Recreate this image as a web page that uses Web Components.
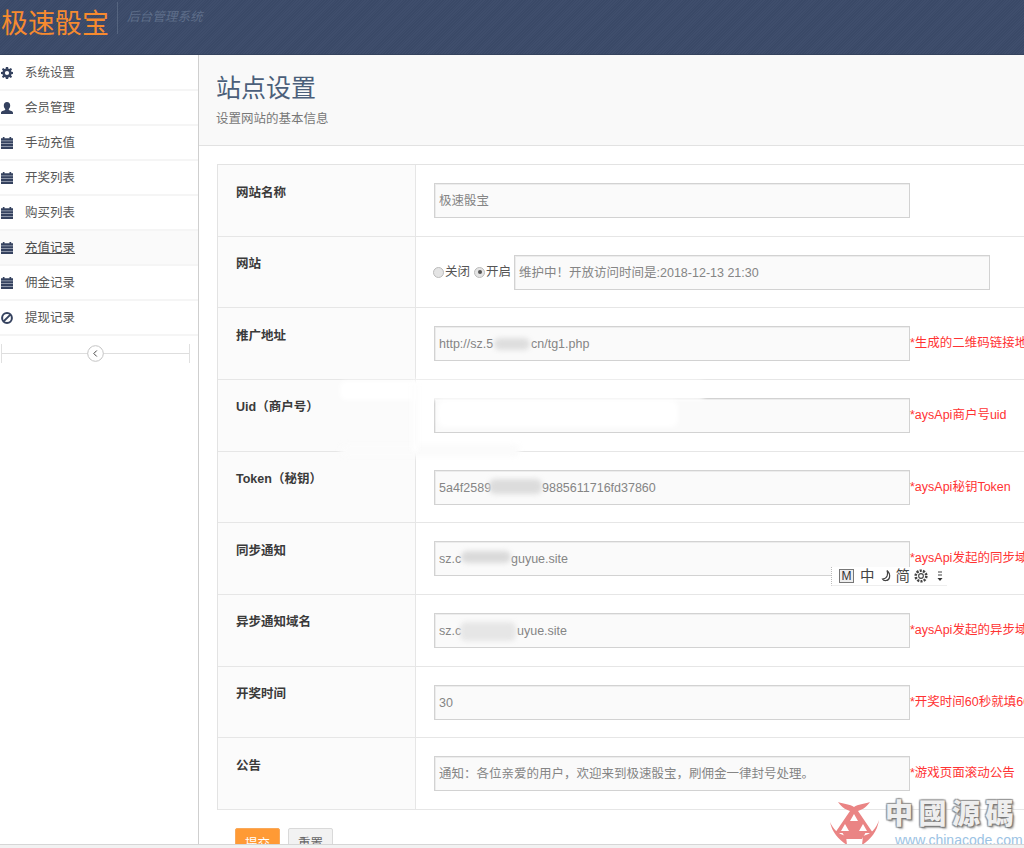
<!DOCTYPE html>
<html lang="zh"><head><meta charset="utf-8"><title>站点设置</title>
<style>
html,body{margin:0;padding:0;width:1024px;height:848px;overflow:hidden;background:#fff;font:12.5px/1.5 "Liberation Sans","Noto Sans CJK SC",sans-serif;color:#555}
</style></head><body>
<admin-app>
  <app-header slot="header" brand="极速骰宝" tag="后台管理系统"></app-header>
  <side-nav slot="side">
    <nav-item icon="gear">系统设置</nav-item>
    <nav-item icon="user">会员管理</nav-item>
    <nav-item icon="cal">手动充值</nav-item>
    <nav-item icon="cal">开奖列表</nav-item>
    <nav-item icon="cal">购买列表</nav-item>
    <nav-item icon="cal" active>充值记录</nav-item>
    <nav-item icon="cal">佣金记录</nav-item>
    <nav-item icon="ban">提现记录</nav-item>
    <nav-collapse></nav-collapse>
  </side-nav>
  <page-head heading="站点设置" sub="设置网站的基本信息"></page-head>
  <settings-form>
    <form-row label="网站名称"><text-field value="极速骰宝"></text-field></form-row>
    <form-row label="网站"><radio-pair></radio-pair><text-field value="维护中！开放访问时间是:2018-12-13 21:30"></text-field></form-row>
    <form-row label="推广地址"><text-field value="http://sz.5" after="cn/tg1.php" at="92"></text-field><span slot="hint">*生成的二维码链接地址</span></form-row>
    <form-row label="Uid（商户号）"><text-field value=""></text-field><span slot="hint">*aysApi商户号uid</span></form-row>
    <form-row label="Token（秘钥）"><text-field value="5a4f2589" after="9885611716fd37860" at="103"></text-field><span slot="hint">*aysApi秘钥Token</span></form-row>
    <form-row label="同步通知"><text-field value="sz.c" after="guyue.site" at="72"></text-field><span slot="hint">*aysApi发起的同步域名</span></form-row>
    <form-row label="异步通知域名"><text-field value="sz.c" after="uyue.site" at="78"></text-field><span slot="hint">*aysApi发起的异步域名</span></form-row>
    <form-row label="开奖时间"><text-field value="30"></text-field><span slot="hint">*开奖时间60秒就填60</span></form-row>
    <form-row label="公告"><text-field value="通知：各位亲爱的用户，欢迎来到极速骰宝，刷佣金一律封号处理。"></text-field><span slot="hint">*游戏页面滚动公告</span></form-row>
    <form-buttons slot="actions"></form-buttons>
  </settings-form>
  <smudge-patch style="left:494px;top:338px;width:36px;height:12px" tone="#dedede"></smudge-patch>
  <smudge-patch style="left:489px;top:479px;width:53px;height:15px" tone="#dcdcdc"></smudge-patch>
  <smudge-patch style="left:461px;top:551px;width:50px;height:12px" tone="#dadada"></smudge-patch>
  <smudge-patch style="left:460px;top:622px;width:56px;height:19px" tone="#e6e6e6"></smudge-patch>
  <smudge-patch style="left:340px;top:381px;width:365px;height:19px" tone="#ffffff"></smudge-patch>
  <smudge-patch style="left:438px;top:400px;width:240px;height:27px" tone="#ffffff"></smudge-patch>
  <smudge-patch style="left:340px;top:444px;width:180px;height:13px" tone="#fbfbfb"></smudge-patch>
  <smudge-patch style="left:411px;top:381px;width:8px;height:72px" tone="#fdfdfd"></smudge-patch>
  <ime-bar></ime-bar>
  <site-mark></site-mark>
</admin-app>
<script>
function def(name, css, html){
  customElements.define(name, class extends HTMLElement{
    connectedCallback(){
      if(this.shadowRoot) return;
      const r=this.attachShadow({mode:'open'});
      const get=k=>this.getAttribute(k)||'';
      r.innerHTML='<style>'+css+'</style>'+(typeof html==='function'?html(get,this):html);
    }
  });
}
const ICONS={
 gear:'<path fill-rule="evenodd" d="M4.900 0h2.200l.3 1.700 1 .4L9.800 1l1.300 1.300-1.100 1.500.4 1 1.600.3v1.900l-1.600.3-.4 1 1.100 1.500-1.300 1.300-1.400-1.100-1 .4-.3 1.700H4.900l-.3-1.700-1-.4L2.200 11 .9 9.700 2 8.200l-.4-1L0 6.900V5.100l1.600-.3.4-1L.9 2.300 2.200 1l1.400 1.100 1-.4zM6 3.900a2.100 2.100 0 1 0 0 4.200 2.100 2.100 0 0 0 0-4.200z"/>',
 user:'<path d="M6 0c2 0 3.200 1.400 3.200 3.400 0 1.400-.5 2.700-1.400 3.500v1c1.500.6 4.200 1.100 4.200 2.900V12H0v-1.200c0-1.800 2.700-2.300 4.200-2.900v-1C3.300 6.100 2.800 4.800 2.800 3.400 2.800 1.400 4 0 6 0z"/>',
 cal:'<path d="M1.800 0h1.700v1.300h5V0h1.700v1.300H12V12H0V1.300h1.800z"/><path fill="#aab1c0" d="M0 3.600h12v.7H0zM0 6.200h12v.7H0zM0 9h12v.7H0z"/>',
 ban:'<circle cx="6" cy="6" r="4.900" fill="none" stroke="#35425f" stroke-width="2"/><path d="M2.600 9.400 9.400 2.600" fill="none" stroke="#35425f" stroke-width="2"/>'
};
def('admin-app',`
 :host{display:grid;grid-template-columns:199px 1fr;grid-template-rows:55px 1fr;width:1024px;height:848px;position:relative;overflow:hidden}
 ::slotted([slot=header]){grid-column:1/3}
 main{display:block;min-width:0;overflow:hidden}
 .foot{position:absolute;left:0;right:0;bottom:0;height:4px;background:#f2f2f2;border-top:1px solid #d6d6d6;box-sizing:border-box}
`,`<slot name="header"></slot><slot name="side"></slot><main><slot></slot></main><div class="foot"></div>`);
def('app-header',`
 :host{display:flex;align-items:flex-start;height:55px;box-sizing:border-box;border-bottom:1px solid #35435e;
  background:#3b4a69 repeating-linear-gradient(135deg,rgba(255,255,255,.018) 0 1px,rgba(0,0,0,.018) 1px 2px)}
 b{font-weight:400;font-size:27px;line-height:36px;color:#f68a2f;margin:6px 8px 0 1px;white-space:nowrap}
 i{display:block;width:1px;height:32px;margin:2px 9px 0 0;background:#55647f}
 em{font-size:12.6px;line-height:18px;color:#5e6e8a;margin-top:8px;white-space:nowrap}
`,g=>`<b>${g('brand')}</b><i></i><em>${g('tag')}</em>`);
def('side-nav',`:host{display:block;border-right:1px solid #cfcfcf;background:#fff;box-sizing:border-box;width:199px;padding-top:1px}`,`<slot></slot>`);
def('nav-item',`
 :host{display:flex;align-items:center;height:35px;box-sizing:border-box;border-bottom:2px solid #f5f5f5;padding:1px 0 0 1px;color:#585858;font-size:12.5px}
 :host([active]){background:#fafafa}
 :host([active]) span{text-decoration:underline;color:#4e4e4e}
 svg{width:12px;height:12px;fill:#35425f;margin-right:12px;flex:none}
`,g=>`<svg viewBox="0 0 12 12" aria-hidden="true">${ICONS[g('icon')]}</svg><span><slot></slot></span>`);
def('nav-collapse',`
 :host{display:flex;align-items:center;height:19px;width:189px;margin:8px 0 0 1px;position:relative;box-sizing:border-box;border-left:1px solid #e0e0e0;border-right:1px solid #e0e0e0}
 hr{flex:1;border:0;height:1px;background:#dedede;margin:0}
 svg{position:absolute;left:85px;top:1px;width:17px;height:17px}
`,`<hr><svg viewBox="0 0 17 17"><circle cx="8.500" cy="8.500" r="7.800" fill="#fff" stroke="#c4c4c4"/><path d="M9.800 5.500 6.800 8.500l3 3" fill="none" stroke="#444" stroke-width="1"/></svg>`);
def('page-head',`
 :host{display:block;height:91px;box-sizing:border-box;padding:14px 0 0 18px;border-bottom:1px solid #e2e2e2;background:#f9f9f9}
 h1{margin:0 0 0 -1px;font-weight:400;font-size:25px;line-height:38px;color:#4b5f7a}
 p{margin:3px 0 0 -1px;font-size:12.5px;line-height:18px;color:#777}
`,g=>`<h1>${g('heading')}</h1><p>${g('sub')}</p>`);
def('settings-form',`
 :host{display:block;padding:18px 0 0 18px;width:1000px}
 .t{border-top:1px solid #e3e3e3;border-left:1px solid #e3e3e3}
 .a{padding:18px 0 0 18px}
`,`<div class="t"><slot></slot></div><div class="a"><slot name="actions"></slot></div>`);
def('form-row',`
 :host{display:grid;grid-template-columns:198px 1fr;height:71.670px;box-sizing:border-box;border-bottom:1px solid #e6e6e6}
 .l{background:#fbfbfb;border-right:1px solid #e6e6e6;padding:18.500px 0 0 18px;font-weight:700;font-size:12.5px;line-height:18px;color:#3a3a3a}
 .v{display:flex;align-items:flex-start;padding:18px 0 0 18px;min-width:0}
 .h{color:#f33;font-size:12.5px;line-height:18px;margin:8px 0 0 0;white-space:nowrap}
`,g=>`<div class="l">${g('label')}</div><div class="v"><slot></slot><span class="h"><slot name="hint"></slot></span></div>`);
def('text-field',`
 :host{display:block;width:476px;height:35px;box-sizing:border-box;border:1px solid #d2d2d2;box-shadow:inset 1px 1px 0 #ececec;background:#fafafa;padding:1px 4px 0;line-height:33px;font-size:12.5px;color:#858585;white-space:nowrap;overflow:hidden;flex:none}
 span{display:inline-block;overflow:hidden;vertical-align:top}
`,g=>g('after')?`<span style="width:${g('at')}px">${g('value')}</span>${g('after')}`:g('value'));
def('radio-pair',`
 :host{display:flex;align-items:center;height:35px;font-size:12.5px;color:#555;flex:none;padding-right:3px;margin-left:-1px}
 i{display:block;width:11px;height:11px;border-radius:50%;border:1px solid #bbb;background:#e4e4e4;box-sizing:border-box;margin-right:1px;position:relative}
 i.on::after{content:"";position:absolute;left:2.500px;top:2.500px;width:4px;height:4px;border-radius:50%;background:#555}
 span{margin-right:4px}
 span:last-child{margin-right:0}
`,`<i></i><span>关闭</span><i class="on"></i><span>开启</span>`);
def('form-buttons',`
 :host{display:flex;gap:8px}
 b{display:block;font-weight:400;width:45px;height:40px;box-sizing:border-box;text-align:center;line-height:30px;font-size:12.5px;border-radius:2px}
 .p{background:#ff9a35;color:#fff;border:1px solid #f9a95a}
 .s{background:#f2f2f2;color:#666;border:1px solid #d9d9d9}
`,`<b class="p">提交</b><b class="s">重置</b>`);
def('smudge-patch',`
 :host{display:block;position:absolute;border-radius:6px;filter:blur(2.500px)}
 div{width:100%;height:100%;border-radius:inherit}
`,g=>`<div style="background:${g('tone')}"></div>`);
def('ime-bar',`
 :host{position:absolute;left:831px;top:567px;width:116px;height:19px;display:flex;align-items:center;background:#fff;box-sizing:border-box;border-left:1px dotted #bbb;border-bottom:1px solid #eee;font-size:14.500px;color:#444;padding-left:7px}
 .m{width:15px;height:14px;border:1px solid #777;box-sizing:border-box;background:#eee;font-size:12px;line-height:12px;text-align:center;margin-right:6px;color:#333;flex:none}
 span{margin-right:5px;line-height:18px}
 svg{display:block;flex:none}
`,`<div class="m">M</div><span>中</span>
 <svg width="12" height="14" viewBox="0 0 12 14" style="margin-right:4px"><path d="M7 1.500c1.500 3.500.5 8-4.500 8.500 1 2 6 2.500 7-1.500.7-3-1-5.700-2.500-7z" fill="none" stroke="#444" stroke-width="1.200"/></svg>
 <span style="margin-right:3px">简</span>
 <svg width="16" height="16" viewBox="0 0 15 15" style="margin-right:8px"><circle cx="7.500" cy="7.500" r="5" fill="none" stroke="#444" stroke-width="2.400" stroke-dasharray="2 1.100"/><circle cx="7.500" cy="7.500" r="2.200" fill="none" stroke="#444"/></svg>
 <svg width="6" height="12" viewBox="0 0 6 12"><path d="M1 2h4M1 5h4" stroke="#444" stroke-width="1"/><path d="M.5 8h5l-2.500 3z" fill="#333"/></svg>`);
def('site-mark',`
 :host{position:absolute;left:828px;top:798px;width:196px;height:50px;display:block;pointer-events:none}
 svg{position:absolute;left:0;top:0}
 b{position:absolute;left:57px;top:-2px;font:900 28px/32px "Noto Sans CJK TC",sans-serif;color:#eee;letter-spacing:5.500px;white-space:nowrap;text-shadow:1px 1px 1px #777,-1px -1px 1px #999,1px -1px 1px #999,-1px 1px 1px #999,2px 2px 2px #aaa}
 u{position:absolute;left:67px;top:35px;text-decoration:none;font:14px/15px "Liberation Sans",sans-serif;color:#9cc3e4;white-space:nowrap}
`,`<svg width="54" height="50" viewBox="0 0 54 50"><g fill="#ea8484"><path d="M10 4C16 6 22 6 26 9 30 6 36 6 42 4 38 10 33 12 30 13L45 35H7L22 13C19 12 14 10 10 4z"/><path d="M2 24C4 34 10 41 19 47L18 38C10 36 5 31 2 24zM51 22C49 34 43 41 34 47L35 38C43 36 48 31 51 22z"/><path d="M14 34h24l-4 7H18z"/></g><g fill="#fff"><path d="M26 16l4 7h-8zM17 26l4 7h-8zM35 26l4 7h-8z"/></g></svg><b>中國源碼</b><u>www.chinacode.com</u>`);
</script>
</body></html>
